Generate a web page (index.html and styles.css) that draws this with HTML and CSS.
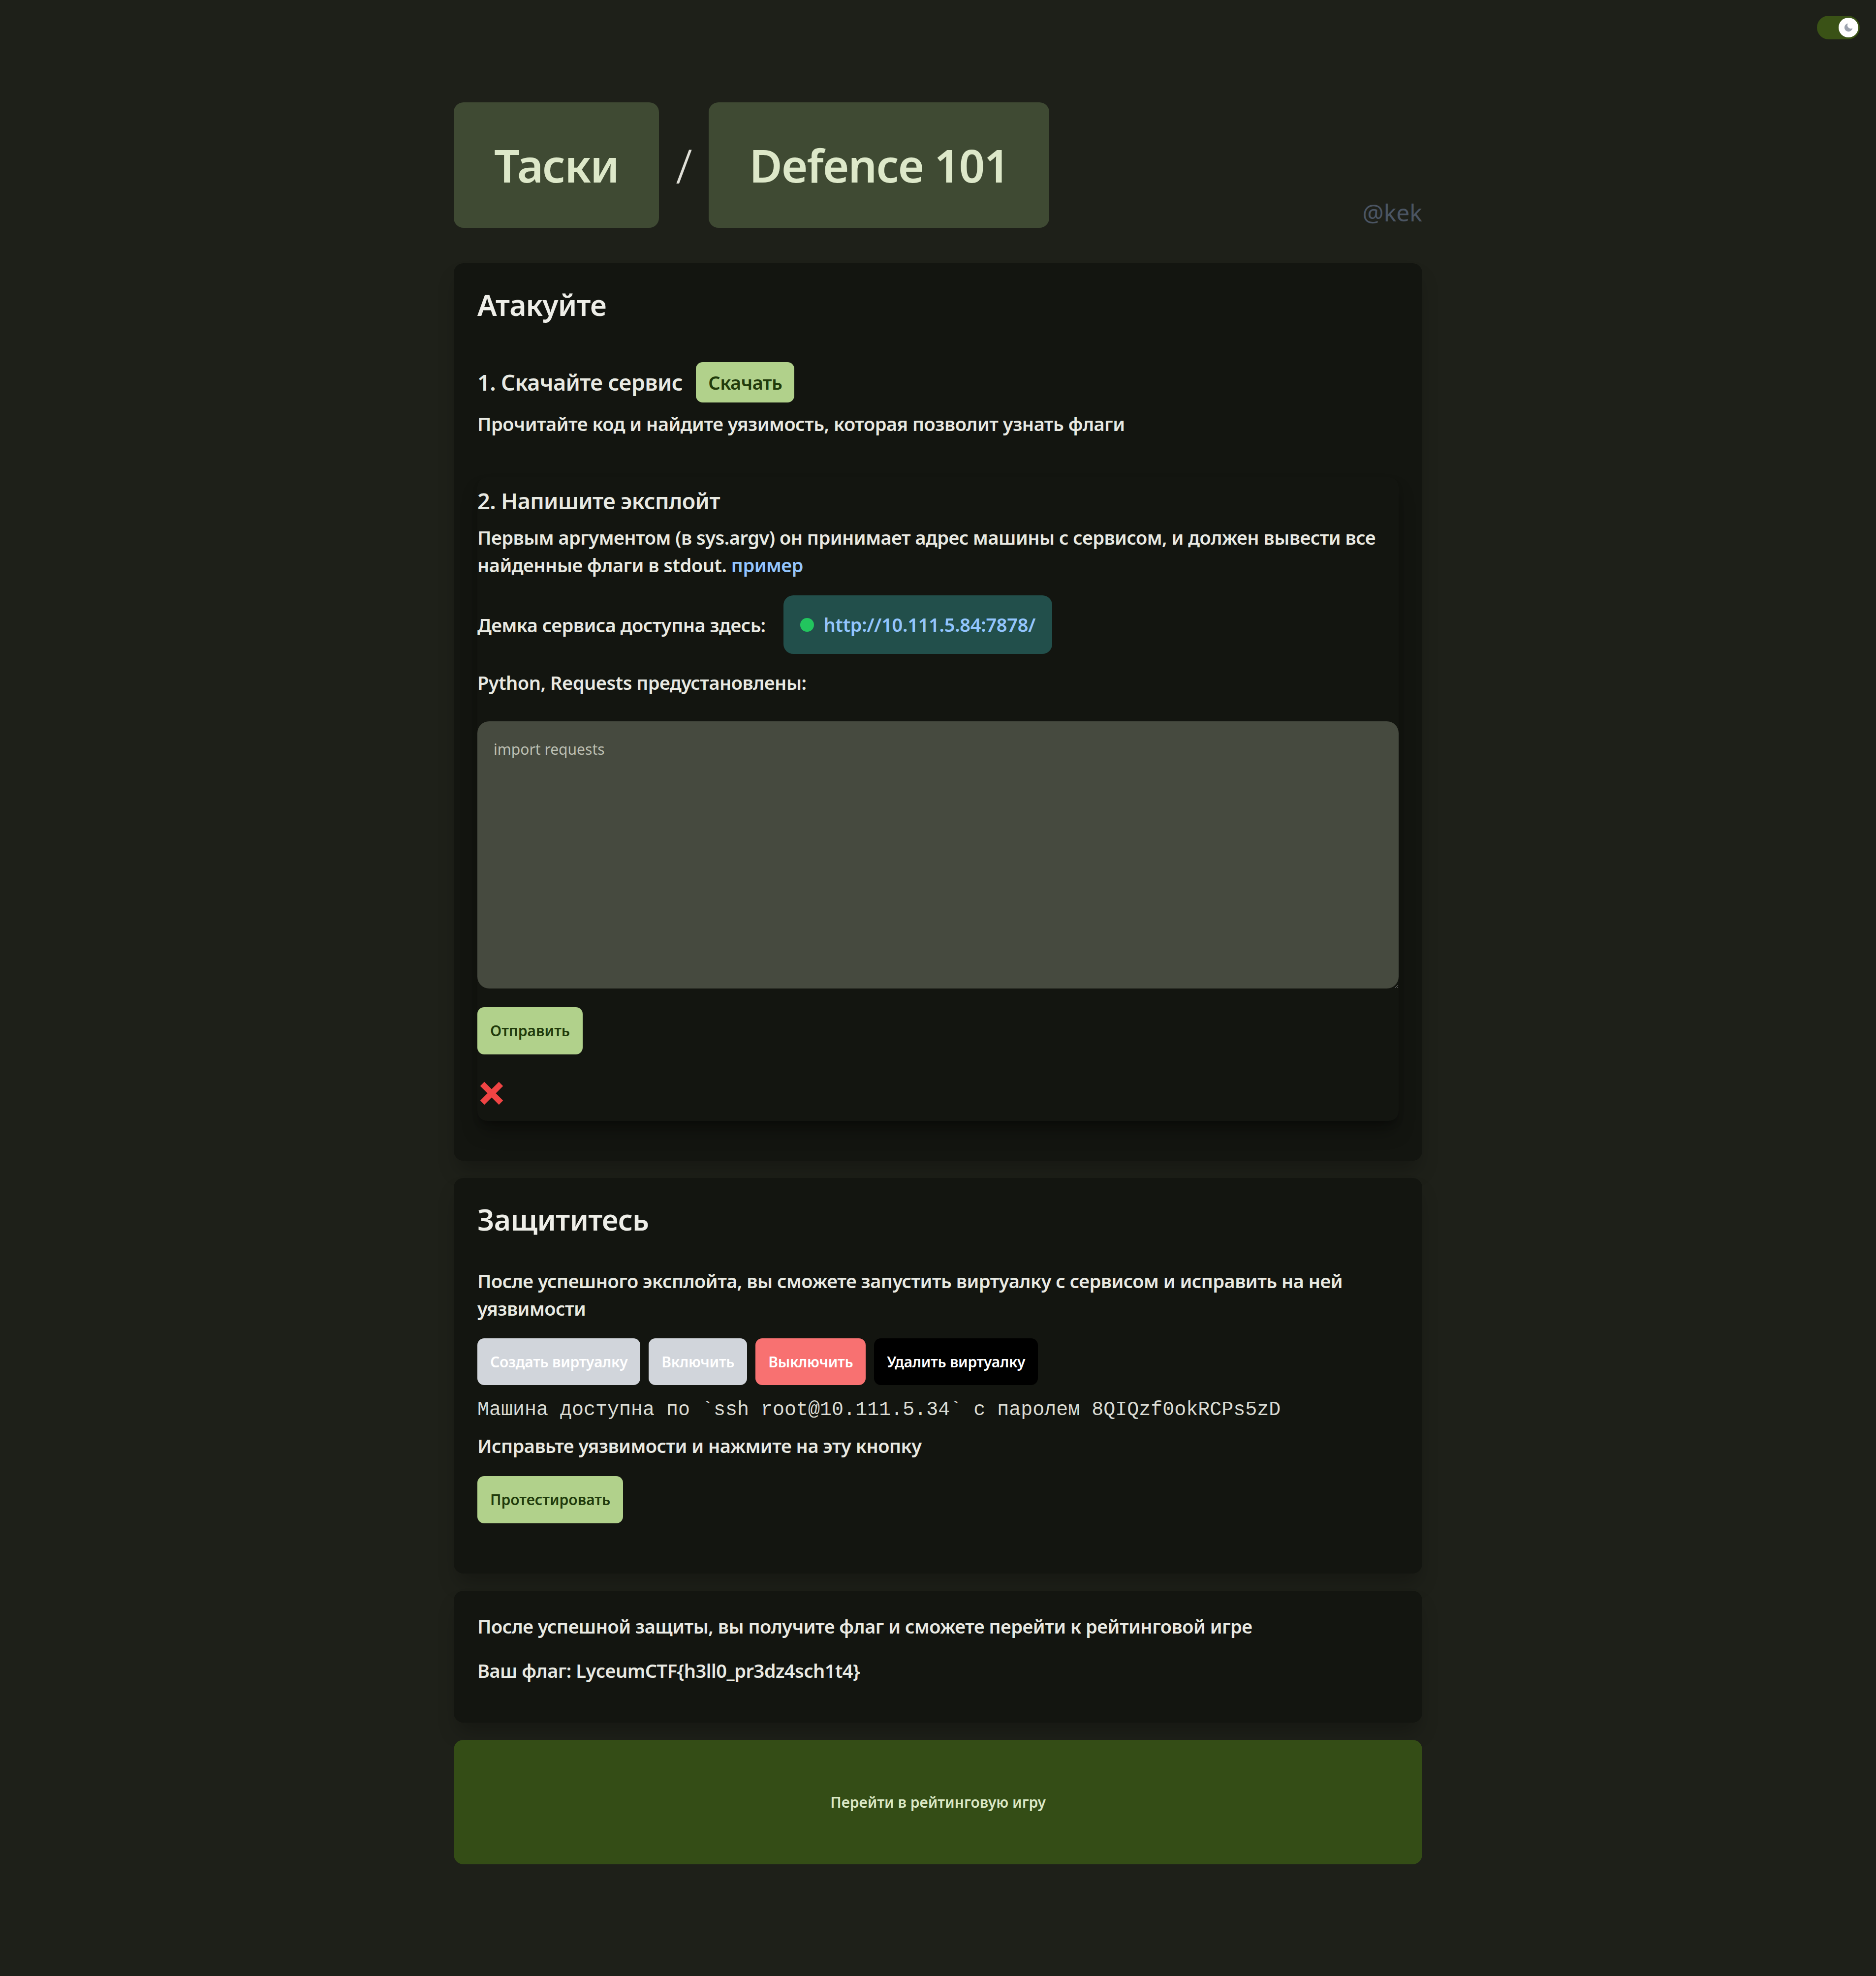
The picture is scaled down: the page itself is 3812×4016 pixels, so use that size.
FILE: index.html
```html
<!DOCTYPE html>
<html lang="ru">
<head>
<meta charset="utf-8">
<title>Defence 101</title>
<link rel="stylesheet" href="styles.css">
</head>
<body>
<div class="theme-toggle">
  <span class="knob">
    <svg class="moon" viewBox="0 0 24 24"><path d="M21 12.79A9 9 0 1 1 11.21 3 7 7 0 0 0 21 12.79z"/></svg>
  </span>
</div>
<div class="page">
  <header class="header">
    <nav class="crumbs">
      <a class="crumb" href="#">Таски</a>
      <span class="sep">/</span>
      <a class="crumb" href="#">Defence 101</a>
    </nav>
    <span class="user">@kek</span>
  </header>

  <section class="card card-first">
    <h2 class="card-title">Атакуйте</h2>
    <div class="step-row">
      <h3 class="step-title">1. Скачайте сервис</h3>
      <button class="btn btn-green btn-lg">Скачать</button>
    </div>
    <p class="text read">Прочитайте код и найдите уязимость, которая позволит узнать флаги</p>

    <div class="exploit">
      <h3 class="step-title">2. Напишите эксплойт</h3>
      <p class="text para"><span>Первым аргументом (в sys.argv) он принимает адрес машины с сервисом, и должен вывести все</span><br><span>найденные флаги в stdout.</span> <a class="link" href="#">пример</a></p>
      <div class="demo-row">
        <span class="text">Демка сервиса доступна здесь:</span>
        <a class="pill" href="#"><span class="dot"></span>http://10.111.5.84:7878/</a>
      </div>
      <p class="text python">Python, Requests предустановлены:</p>
      <textarea class="code" placeholder="import requests"></textarea>
      <button class="btn btn-green btn-sm btn-send">Отправить</button>
      <div class="status">
        <svg class="fail" viewBox="0 0 46 46"><path d="M4 4 L42 42 M42 4 L4 42"/></svg>
      </div>
    </div>
  </section>

  <section class="card">
    <h2 class="card-title">Защититесь</h2>
    <p class="text lead">После успешного эксплойта, вы сможете запустить виртуалку с сервисом и исправить на ней уязвимости</p>
    <div class="vm-row">
      <button class="btn btn-vm btn-gray">Создать виртуалку</button>
      <button class="btn btn-vm btn-gray">Включить</button>
      <button class="btn btn-vm btn-red">Выключить</button>
      <button class="btn btn-vm btn-black">Удалить виртуалку</button>
    </div>
    <p class="mono">Машина доступна по `ssh root@10.111.5.34` с паролем 8QIQzf0okRCPs5zD</p>
    <p class="text fix">Исправьте уязвимости и нажмите на эту кнопку</p>
    <button class="btn btn-green btn-sm btn-test">Протестировать</button>
  </section>

  <section class="card flag-card">
    <p class="text">После успешной защиты, вы получите флаг и сможете перейти к рейтинговой игре</p>
    <p class="text">Ваш флаг: LyceumCTF{h3ll0_pr3dz4sch1t4}</p>
  </section>

  <a class="rating" href="#">Перейти в рейтинговую игру</a>
</div>
</body>
</html>
```

FILE: styles.css
```css
* { box-sizing: border-box; }
html, body { margin: 0; }
body {
  background: #1e2019;
  color: #e8e9e2;
  font-family: "Noto Sans", "Open Sans", sans-serif;
  font-weight: 500;
  min-height: 4016px;
}

.theme-toggle {
  position: absolute;
  top: 32px;
  right: 33px;
  width: 87px;
  height: 48px;
  border-radius: 24px;
  background: #3a5216;
}
.knob {
  position: absolute;
  top: 4px;
  right: 3px;
  width: 40px;
  height: 40px;
  border-radius: 50%;
  background: #ffffff;
  display: flex;
  align-items: center;
  justify-content: center;
}
.moon { width: 22px; height: 22px; fill: #9ca3af; }

.page {
  width: 1968px;
  margin: 0 auto;
  padding-top: 208px;
  padding-bottom: 200px;
}

.header {
  display: flex;
  justify-content: space-between;
  align-items: flex-end;
}
.crumbs {
  display: flex;
  align-items: center;
  gap: 34px;
}
.crumb {
  background: #3f4a33;
  color: #dde8c9;
  border-radius: 20px;
  padding: 70px 82px;
  font-size: 92px;
  line-height: 115px;
  font-weight: 600;
  letter-spacing: -2px;
  text-decoration: none;
}
.sep {
  font-size: 96px;
  font-weight: 300;
  color: #e0e0d8;
}
.user {
  font-size: 48px;
  line-height: 48px;
  font-weight: 400;
  color: #4b5563;
  margin-bottom: 7px;
}

.card {
  background: #131510;
  border-radius: 20px;
  padding: 44px 48px;
  margin-top: 35px;
  box-shadow: 0 26px 38px -8px rgba(0,0,0,0.25);
}
.card-first { margin-top: 72px; }

.card-title {
  margin: 0;
  font-size: 59px;
  line-height: 80px;
  font-weight: 600;
  letter-spacing: -0.8px;
  color: #eeeee8;
}
.step-row {
  display: flex;
  align-items: center;
  gap: 27px;
  margin-top: 77px;
}
.step-title {
  margin: 0;
  font-size: 45px;
  line-height: 62px;
  font-weight: 600;
  letter-spacing: -0.6px;
}
.text {
  margin: 0;
  font-size: 38px;
  line-height: 56px;
  font-weight: 600;
  letter-spacing: -0.5px;
}
.read { margin-top: 15px; }

.btn {
  border: 0;
  font-family: inherit;
  font-weight: 600;
  border-radius: 14px;
  cursor: pointer;
}
.btn-green { background: #b1d18b; color: #213b0c; }
.btn-lg {
  font-size: 38px;
  line-height: 50px;
  padding: 16px 25px;
  font-weight: 600;
  letter-spacing: -0.5px;
}
.btn-sm {
  font-size: 30px;
  line-height: 46px;
  padding: 25px 26px;
}

.exploit {
  margin-top: 81px;
  margin-bottom: 37px;
  padding-top: 17px;
  padding-bottom: 33px;
  border-radius: 20px;
  box-shadow: 0 26px 38px -8px rgba(0,0,0,0.35), 0 10px 15px -6px rgba(0,0,0,0.3);
}
.para { margin-top: 15px; }
.link { color: #93c5fd; text-decoration: none; }

.demo-row {
  display: flex;
  align-items: center;
  gap: 36px;
  margin-top: 34px;
}
.pill {
  display: flex;
  align-items: center;
  gap: 20px;
  background: #224f4b;
  border-radius: 20px;
  padding: 31px 34px;
  font-size: 38px;
  line-height: 57px;
  font-weight: 600;
  letter-spacing: -0.3px;
  color: #93c5fd;
  text-decoration: none;
}
.dot {
  width: 28px;
  height: 28px;
  border-radius: 50%;
  background: #22c55e;
}
.python { margin-top: 30px; }

.code {
  display: block;
  width: 100%;
  height: 543px;
  margin-top: 51px;
  background: #464a3f;
  border: 0;
  border-radius: 24px;
  padding: 35px 33px;
  font-family: inherit;
  font-size: 30px;
  line-height: 43px;
  font-weight: 400;
  color: #e8e9e2;
  resize: vertical;
}
.code::placeholder { color: #bcbfb2; }

.btn-send { display: block; margin-top: 38px; }
.status { margin-top: 56px; height: 46px; padding-left: 6px; }
.fail {
  display: block;
  width: 46px;
  height: 46px;
  fill: none;
  stroke: #ef4444;
  stroke-width: 12;
  overflow: visible;
}

.lead { margin-top: 57px; }
.vm-row {
  display: flex;
  gap: 17px;
  margin-top: 33px;
}
.btn-vm {
  font-size: 30px;
  line-height: 43px;
  padding: 26px 26px;
  letter-spacing: -0.3px;
  color: #ffffff;
}
.btn-gray { background: #d1d5db; }
.btn-red { background: #f87171; }
.btn-black { background: #000000; }

.mono {
  margin: 23px 0 0;
  font-family: "Liberation Mono", monospace;
  font-size: 40px;
  line-height: 56px;
  font-weight: 400;
  color: #dadbd3;
}
.fix { margin-top: 16px; }
.btn-test { display: block; margin-top: 34px; margin-bottom: 58px; }

.flag-card p { margin: 0 0 34px; }

.rating {
  display: flex;
  align-items: center;
  justify-content: center;
  margin-top: 35px;
  height: 253px;
  background: #344d16;
  border-radius: 20px;
  color: #dbe8c5;
  font-size: 30px;
  font-weight: 600;
  text-decoration: none;
}
```
